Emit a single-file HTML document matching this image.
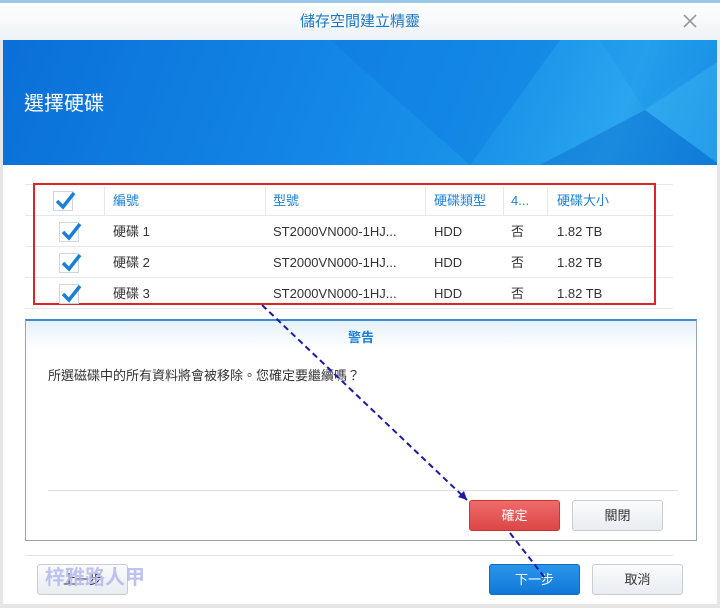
<!DOCTYPE html>
<html><head><meta charset="utf-8"><style>
*{margin:0;padding:0;box-sizing:border-box}
body{width:720px;height:608px;background:#fff;font-family:"Liberation Sans","Noto Sans CJK TC",sans-serif;position:relative;overflow:hidden;font-size:13px;line-height:16px;color:#333}
.a{position:absolute;white-space:nowrap}
.btn{position:absolute;height:31px;border:1px solid #c8cdd3;border-radius:3px;background:linear-gradient(#fafbfc,#e9edf1);text-align:center;line-height:29px;font-size:13px;color:#333}
.cb{position:absolute;width:20px;height:20px;border:1px solid #cfd6dd;background:#fff}
.cb svg{position:absolute;left:-1px;top:-3px}
.row{position:absolute;left:25px;width:648px;height:1px;background:#e5e8ec}
</style></head><body>
<div class="a" style="left:0;top:0;width:720px;height:3px;background:#9cc6ea"></div>
<div class="a" style="left:0;top:3px;width:720px;height:37px;background:linear-gradient(#fff,#eef2f6)"></div>
<div class="a" style="left:0;top:14px;width:720px;text-align:center;font-size:15px;color:#1a78c8">儲存空間建立精靈</div>
<svg class="a" style="left:683px;top:14px" width="14" height="14"><path d="M1 1L13 13M13 1L1 13" stroke="#999" stroke-width="1.6"/></svg>
<div class="a" style="left:0;top:40px;width:720px;height:125px;background:linear-gradient(110deg,#0a6fd8 0%,#1386e6 45%,#1a95ea 70%,#2aa5ee 85%,#1285e0 100%)"></div>
<svg class="a" style="left:0;top:40px" width="720" height="125"><polygon points="330,0 560,0 470,125" fill="#0d78de" opacity=".4"/><polygon points="540,125 645,70 720,125" fill="#0a6fd0" opacity=".5"/><polygon points="645,70 720,20 720,125" fill="#3ab2f2" opacity=".5"/><polygon points="600,0 720,0 645,70" fill="#1a95e8" opacity=".4"/></svg>
<div class="a" style="left:24px;top:93px;font-size:20px;line-height:22px;color:#fff">選擇硬碟</div>
<div class="a" style="left:0;top:40px;width:3px;height:568px;background:#e6e6e6"></div>
<div class="a" style="left:717px;top:40px;width:3px;height:568px;background:#e6e6e6"></div>
<div class="row" style="top:184px"></div>
<div class="row" style="top:215px"></div><div class="row" style="top:246px"></div><div class="row" style="top:277px"></div><div class="row" style="top:308px"></div>
<div class="a" style="left:104px;top:186px;width:1px;height:29px;background:#e5e8ec"></div>
<div class="a" style="left:265px;top:186px;width:1px;height:29px;background:#e5e8ec"></div>
<div class="a" style="left:425px;top:186px;width:1px;height:29px;background:#e5e8ec"></div>
<div class="a" style="left:503px;top:186px;width:1px;height:29px;background:#e5e8ec"></div>
<div class="a" style="left:547px;top:186px;width:1px;height:29px;background:#e5e8ec"></div>
<div class="a" style="left:33px;top:183px;width:623px;height:122px;border:2px solid #e0222a"></div>
<div class="cb" style="left:53px;top:191px"><svg width="24" height="24"><path d="M4 12 L10 18 L21 4" stroke="#1a7fd8" stroke-width="3.5" fill="none"/></svg></div>
<div class="cb" style="left:59px;top:222px"><svg width="24" height="24"><path d="M4 12 L10 18 L21 4" stroke="#1a7fd8" stroke-width="3.5" fill="none"/></svg></div>
<div class="cb" style="left:59px;top:253px"><svg width="24" height="24"><path d="M4 12 L10 18 L21 4" stroke="#1a7fd8" stroke-width="3.5" fill="none"/></svg></div>
<div class="cb" style="left:59px;top:284px"><svg width="24" height="24"><path d="M4 12 L10 18 L21 4" stroke="#1a7fd8" stroke-width="3.5" fill="none"/></svg></div>
<div class="a" style="top:193px;left:113px;color:#1a7fd8">編號</div>
<div class="a" style="top:193px;left:273px;color:#1a7fd8">型號</div>
<div class="a" style="top:193px;left:434px;color:#1a7fd8">硬碟類型</div>
<div class="a" style="top:193px;left:511px;color:#1a7fd8">4...</div>
<div class="a" style="top:193px;left:557px;color:#1a7fd8">硬碟大小</div>
<div class="a" style="top:224px;left:113px">硬碟 1</div><div class="a" style="top:224px;left:273px">ST2000VN000-1HJ...</div><div class="a" style="top:224px;left:434px">HDD</div><div class="a" style="top:224px;left:511px">否</div><div class="a" style="top:224px;left:557px">1.82 TB</div>
<div class="a" style="top:255px;left:113px">硬碟 2</div><div class="a" style="top:255px;left:273px">ST2000VN000-1HJ...</div><div class="a" style="top:255px;left:434px">HDD</div><div class="a" style="top:255px;left:511px">否</div><div class="a" style="top:255px;left:557px">1.82 TB</div>
<div class="a" style="top:286px;left:113px">硬碟 3</div><div class="a" style="top:286px;left:273px">ST2000VN000-1HJ...</div><div class="a" style="top:286px;left:434px">HDD</div><div class="a" style="top:286px;left:511px">否</div><div class="a" style="top:286px;left:557px">1.82 TB</div>
<div class="a" style="left:25px;top:319px;width:672px;height:222px;border:1px solid #9aa3ad;border-top:2px solid #3f8ad0;background:#fff"></div>
<div class="a" style="left:26px;top:321px;width:670px;height:28px;background:linear-gradient(#e6f1fb,#fff)"></div>
<div class="a" style="left:26px;top:330px;width:670px;text-align:center;font-weight:bold;color:#1a7fd8">警告</div>
<div class="a" style="left:48px;top:368px">所選磁碟中的所有資料將會被移除。您確定要繼續嗎？</div>
<div class="a" style="left:48px;top:490px;width:630px;height:1px;background:#dde1e5"></div>
<div class="btn" style="left:469px;top:500px;width:91px;background:linear-gradient(#ef6b6b,#dc4646);border-color:#c33;color:#fff">確定</div>
<div class="btn" style="left:572px;top:500px;width:91px">關閉</div>
<div class="a" style="left:25px;top:555px;width:648px;height:1px;background:#e0e3e6"></div>
<div class="btn" style="left:37px;top:564px;width:91px">上一步</div>
<div class="a" style="left:45px;top:567px;font-size:20px;line-height:22px;color:#b3b8ee;opacity:.85;font-weight:bold">梓雅路人甲</div>
<div class="btn" style="left:489px;top:564px;width:91px;background:linear-gradient(#2b95ea,#1079d8);border-color:#0d6cc4;color:#fff">下一步</div>
<div class="btn" style="left:592px;top:564px;width:91px">取消</div>
<div class="a" style="left:0;top:604px;width:720px;height:4px;background:#e6e6e6"></div>
<svg class="a" style="left:0;top:0" width="720" height="608"><path d="M262 305 L467 500" stroke="#1a1aa8" stroke-width="2" stroke-dasharray="6,4" fill="none"/><polygon points="467,500 458,497 464,491" fill="#1a1aa8"/><path d="M510 533 L545 578" stroke="#1a1aa8" stroke-width="2" stroke-dasharray="6,4" fill="none"/></svg>
</body></html>
